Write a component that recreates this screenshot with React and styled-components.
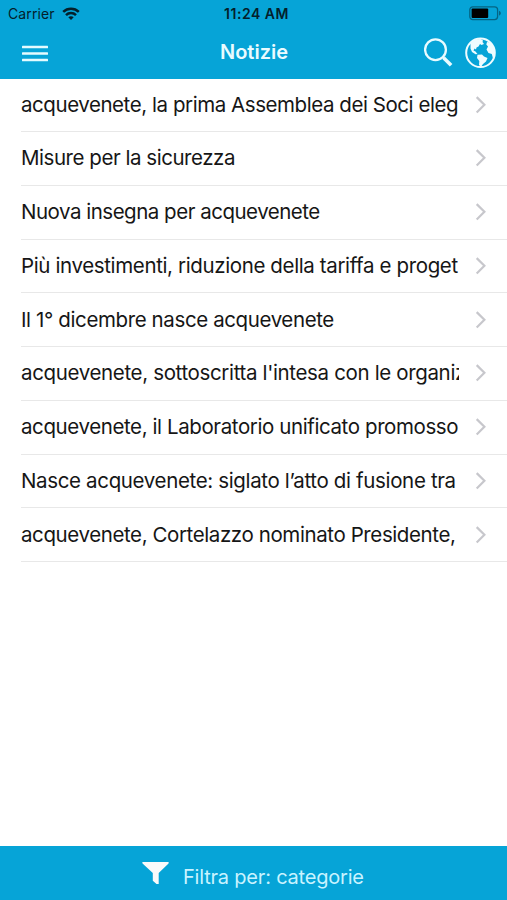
import React from 'react';
import styled, { createGlobalStyle } from 'styled-components';

const news = [
  { text: 'acquevenete, la prima Assemblea dei Soci eleg', spacing: -0.44 },
  { text: 'Misure per la sicurezza', spacing: -0.46 },
  { text: 'Nuova insegna per acquevenete', spacing: -0.49 },
  { text: 'Più investimenti, riduzione della tariffa e proget', spacing: -0.37 },
  { text: 'Il 1° dicembre nasce acquevenete', spacing: -0.39 },
  { text: "acquevenete, sottoscritta l'intesa con le organiz", spacing: -0.35 },
  { text: 'acquevenete, il Laboratorio unificato promosso', spacing: -0.4 },
  { text: 'Nasce acquevenete: siglato l’atto di fusione tra', spacing: -0.35 },
  { text: 'acquevenete, Cortelazzo nominato Presidente,', spacing: -0.4 },
];

const App = () => {
  return (
    <Page>
      <GlobalStyle />
      <Header>
        {/* status bar */}
        <StatusBar>
          <Carrier>
            Carrier
            <WifiIcon />
          </Carrier>
          <Time>11:24 AM</Time>
          <BatteryIcon />
        </StatusBar>

        {/* nav bar */}
        <NavBar>
          <IconButton aria-label="Menu">
            <MenuIcon />
          </IconButton>
          <Title>Notizie</Title>
          <Actions>
            <IconButton aria-label="Cerca">
              <SearchIcon />
            </IconButton>
            <IconButton aria-label="Lingua">
              <GlobeIcon />
            </IconButton>
          </Actions>
        </NavBar>
      </Header>

      <List>
        {news.map((item) => (
          <Item key={item.text}>
            <ItemText $spacing={item.spacing}>{item.text}</ItemText>
            <Chevron />
          </Item>
        ))}
      </List>

      <Footer>
        <FilterIcon />
        <FooterText>Filtra per: categorie</FooterText>
      </Footer>
    </Page>
  );
};

export default App;

const WifiIcon = () => (
  <svg width="18" height="14" viewBox="0 0 18 14" fill="none" stroke="#04202b" strokeWidth="2.5">
    <path d="M1.2 4.9C5.6.7 12.4.7 16.8 4.9" />
    <path d="M4 8.1C6.8 5.4 11.2 5.4 14 8.1" />
    <path d="M9 13L6.3 10.3C7.8 8.9 10.2 8.9 11.7 10.3Z" fill="#04202b" stroke="none" />
  </svg>
);

const BatteryIcon = () => (
  <svg width="33" height="15" viewBox="0 0 33 15">
    <rect x="0.8" y="0.8" width="27.8" height="12.8" rx="3" fill="none" stroke="#056483" strokeWidth="1.3" />
    <rect x="2.6" y="2.5" width="16.6" height="9.4" rx="1" fill="#000" />
    <path d="M30 4.8C32.4 5.5 32.4 8.9 30 9.6Z" fill="#056483" />
  </svg>
);

const MenuIcon = () => (
  <svg width="26" height="18" viewBox="0 0 26 18" fill="#e4fbff">
    <rect y="0.8" width="26" height="2.4" rx="0.5" />
    <rect y="7.3" width="26" height="2.4" rx="0.5" />
    <rect y="13.8" width="26" height="2.4" rx="0.5" />
  </svg>
);

const SearchIcon = () => (
  <svg width="30" height="30" viewBox="0 0 30 30" fill="none" stroke="#e9fbff">
    <circle cx="11.5" cy="11.7" r="10.4" strokeWidth="2.3" />
    <path d="M18.8 19L21 21.2" strokeWidth="2.3" />
    <path d="M19.8 20L27.1 27.3" strokeWidth="3.6" />
  </svg>
);

const GlobeIcon = () => (
  <svg width="32" height="32" viewBox="0 0 32 32" fill="#effcff">
    <circle cx="15.5" cy="15.8" r="14.3" fill="none" stroke="#effcff" strokeWidth="2" />
    <path d="M5.5 6.5L10 2.5L15.5 2L18 3.5L17.5 5L19 7L16.5 8L15 7L13.5 9.5L11.5 10.5L11 12.5L9.5 11.5L8.5 13.5L10.5 14.5L12.5 17L10.5 17.3L7 15L5.5 11.5Z" />
    <path d="M12.5 17.8L17 17.5L19 19.5L22.5 21L21 24.5L18 27L16 30L14 28L14.3 24L12 21Z" />
    <path d="M22 5L25.5 5.5L29.5 11.5L30 17.5L28 21.5L26.8 17L23.5 16L21.5 12.5L23 9.5L21.3 7.5Z" />
  </svg>
);

const Chevron = () => (
  <svg width="12" height="18" viewBox="0 0 12 18" fill="none" stroke="#c7c7cc" strokeWidth="2.2">
    <path d="M1.7 1.1L9.4 8.8L1.7 16.5" />
  </svg>
);

const FilterIcon = () => (
  <svg width="27" height="23" viewBox="0 0 27 23" fill="#fafafa">
    <path d="M0.6 0H26.4C27 .7 26.8 1.2 26.3 1.7L16.7 10.9V21.9H14.5L10.8 18.7V10.9L0.8 1.7C0.2 1.1 0.1.5 0.6 0Z" />
  </svg>
);

const GlobalStyle = createGlobalStyle`
  * {
    box-sizing: border-box;
  }

  body {
    margin: 0;
    background-color: #fff;
    font-family: Inter, 'Liberation Sans', sans-serif;
  }

  svg {
    display: block;
    flex-shrink: 0;
  }
`;

const Page = styled.div`
  display: flex;
  flex-direction: column;
  width: 507px;
  height: 900px;
  overflow: hidden;
  background-color: #fff;
`;

const Header = styled.header`
  height: 79px;
  flex-shrink: 0;
  background-color: #06a4d7;
`;

const StatusBar = styled.div`
  display: grid;
  grid-template-columns: 1fr auto 1fr;
  align-items: center;
  height: 27px;
  padding: 0 5px 0 8px;
  color: #04202b;

  > svg {
    justify-self: end;
  }
`;

const Carrier = styled.div`
  display: flex;
  align-items: center;
  gap: 7px;
  font-size: 14px;
  letter-spacing: 0.1px;
`;

const Time = styled.div`
  margin-left: 3px;
  font-size: 14px;
  font-weight: 600;
  letter-spacing: 0.5px;
`;

const NavBar = styled.nav`
  display: grid;
  grid-template-columns: 1fr auto 1fr;
  align-items: center;
  height: 51px;
  padding: 0 10px 0 22px;

  > button {
    padding-top: 3px;
  }
`;

const IconButton = styled.button`
  display: flex;
  padding: 0;
  border: none;
  background: none;
`;

const Title = styled.h1`
  margin: 0 11px 1px 0;
  color: #e9fbff;
  font-size: 20px;
  font-weight: 600;
`;

const Actions = styled.div`
  display: flex;
  align-items: center;
  justify-content: flex-end;
  gap: 11px;
`;

const List = styled.ul`
  flex: 1;
  margin: 0;
  padding: 0;
  list-style: none;
`;

const Item = styled.li`
  display: flex;
  align-items: center;
  height: 53.75px;
  margin-left: 21px;
  padding-right: 20px;
  border-bottom: 1px solid #e8e8e8;

  &:first-child {
    height: 53px;
  }
`;

const ItemText = styled.span`
  width: 438px;
  margin-right: 16px;
  overflow: hidden;
  white-space: nowrap;
  color: #161616;
  font-size: 20.5px;
  line-height: 30px;
  letter-spacing: ${({ $spacing }) => $spacing}px;
`;

const Footer = styled.footer`
  display: flex;
  align-items: center;
  height: 54px;
  padding-left: 142px;
  background-color: #06a4d7;
`;

const FooterText = styled.span`
  margin: 8px 0 0 14px;
  color: #c9f3ff;
  font-size: 20px;
  letter-spacing: -0.2px;
`;
